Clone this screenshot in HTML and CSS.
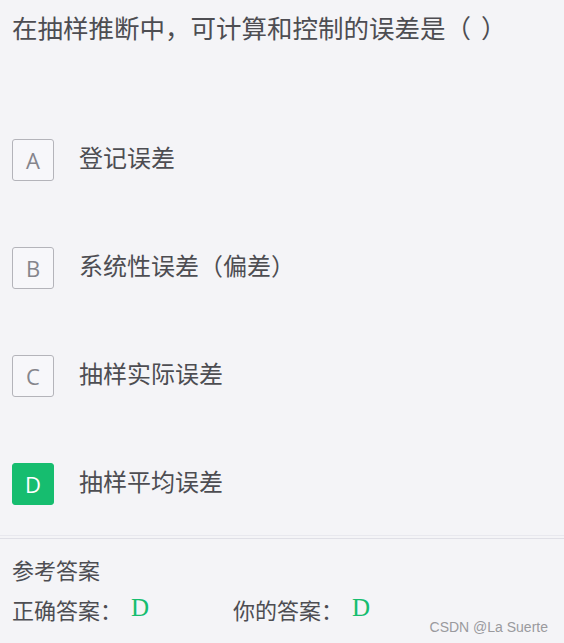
FILE: index.html
```html
<!DOCTYPE html>
<html lang="zh-CN">
  <head>
    <meta charset="UTF-8" />
    <meta name="viewport" content="width=device-width, initial-scale=1.0" />
    <title>单选题</title>
    <link rel="stylesheet" href="styles.css">
  </head>
  <body>
    <div class="page">
      <div class="question">在抽样推断中，可计算和控制的误差是（<span class="blank"></span>）</div>
      <ul class="options">
        <li class="option"><span class="letter">A</span><span class="label">登记误差</span></li>
        <li class="option"><span class="letter">B</span><span class="label">系统性误差（偏差）</span></li>
        <li class="option"><span class="letter">C</span><span class="label">抽样实际误差</span></li>
        <li class="option checked"><span class="letter">D</span><span class="label">抽样平均误差</span></li>
      </ul>
      <div class="answer">
        <div class="answer-title">参考答案</div>
        <div class="answer-row">
          <div class="answer-item">正确答案：<span class="mark">D</span></div>
          <div class="answer-item">你的答案：<span class="mark">D</span></div>
        </div>
      </div>
      <div class="watermark">CSDN @La Suerte</div>
    </div>
  </body>
</html>
```

FILE: styles.css
```css
* {
  margin: 0;
  padding: 0;
  box-sizing: border-box;
}
body {
  background: #f4f4f7;
  font-family: "Noto Sans CJK SC", "Noto Sans", sans-serif;
  color: #4d4d52;
}
.page {
  position: relative;
  height: 643px;
  overflow: hidden;
}
.question {
  padding: 12px 12px 0;
  font-size: 25.5px;
  line-height: 30px;
  white-space: nowrap;
}
.blank {
  display: inline-block;
  width: 10px;
}
.options {
  list-style: none;
  margin-top: 97px;
  padding: 0 12px;
}
.option {
  display: flex;
  align-items: center;
  height: 42px;
  margin-bottom: 66px;
}
.option:last-child {
  margin-bottom: 30px;
}
.letter {
  width: 42px;
  height: 42px;
  border: 1px solid #b4b4ba;
  border-radius: 3px;
  background: #f7f7fa;
  color: #85858c;
  font-family: "Open Sans", "Noto Sans", sans-serif;
  font-size: 22px;
  display: flex;
  align-items: center;
  justify-content: center;
}
.option.checked .letter {
  background: #16bd6f;
  border-color: #16bd6f;
  color: #fff;
}
.label {
  margin-left: 25px;
  margin-top: -7px;
  font-size: 24px;
  line-height: 30px;
}
.answer {
  border-top: 1px solid #e8e8ee;
  box-shadow: inset 0 2px 0 #f4f4f7, inset 0 3px 0 #dfdfe6;
  padding: 18px 12px 0;
}
.answer-title {
  font-size: 22px;
  line-height: 30px;
}
.answer-row {
  display: flex;
  margin-top: 10px;
}
.answer-item {
  font-size: 22px;
  line-height: 30px;
  width: 221px;
  white-space: nowrap;
}
.mark {
  font-family: "Liberation Serif", serif;
  font-size: 25px;
  color: #16bd6f;
  margin-left: 9px;
  position: relative;
  top: -3px;
}
.watermark {
  position: absolute;
  right: 16px;
  bottom: 8px;
  font-family: "Liberation Sans", Arial, sans-serif;
  font-size: 14px;
  color: #9a9a9e;
}
```
